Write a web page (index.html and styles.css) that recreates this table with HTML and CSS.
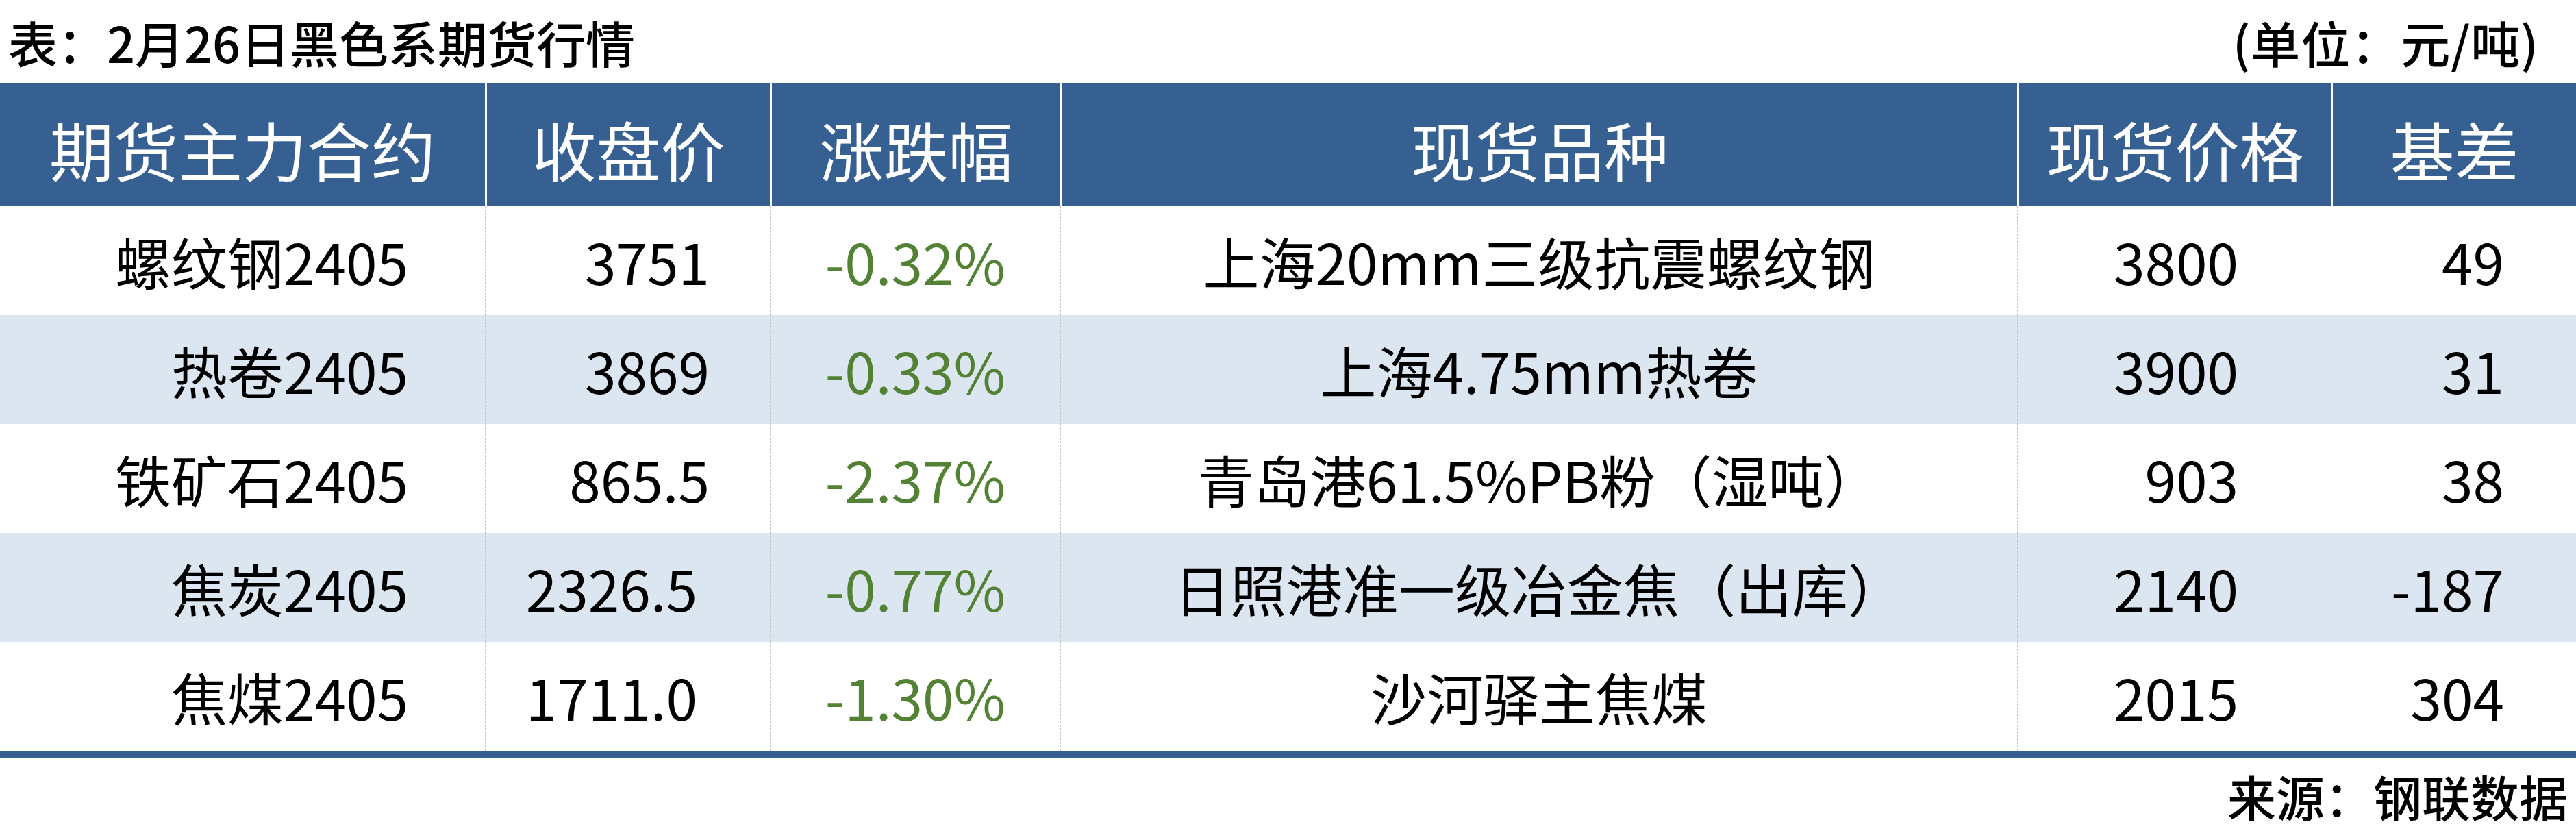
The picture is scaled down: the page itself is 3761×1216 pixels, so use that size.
FILE: index.html
```html
<!DOCTYPE html>
<html lang="zh-CN">
<head>
<meta charset="utf-8">
<title>2月26日黑色系期货行情</title>
<link rel="stylesheet" href="styles.css">
</head>
<body>
<div class="page">
  <div class="caption">
    <div class="title">表：2月26日黑色系期货行情</div>
    <div class="unit">(单位：元/吨)</div>
  </div>
  <table class="quotes">
    <colgroup>
      <col class="c1"><col class="c2"><col class="c3"><col class="c4"><col class="c5"><col class="c6">
    </colgroup>
    <thead>
      <tr>
        <th>期货主力合约</th>
        <th>收盘价</th>
        <th>涨跌幅</th>
        <th>现货品种</th>
        <th>现货价格</th>
        <th>基差</th>
      </tr>
    </thead>
    <tbody>
      <tr>
        <td class="contract">螺纹钢2405</td>
        <td class="close">3751</td>
        <td class="chg">-0.32%</td>
        <td class="spot">上海20mm三级抗震螺纹钢</td>
        <td class="price">3800</td>
        <td class="basis">49</td>
      </tr>
      <tr class="alt">
        <td class="contract">热卷2405</td>
        <td class="close">3869</td>
        <td class="chg">-0.33%</td>
        <td class="spot">上海4.75mm热卷</td>
        <td class="price">3900</td>
        <td class="basis">31</td>
      </tr>
      <tr>
        <td class="contract">铁矿石2405</td>
        <td class="close">865.5</td>
        <td class="chg">-2.37%</td>
        <td class="spot">青岛港61.5%PB粉（湿吨）</td>
        <td class="price">903</td>
        <td class="basis">38</td>
      </tr>
      <tr class="alt">
        <td class="contract">焦炭2405</td>
        <td class="close shifted">2326.5</td>
        <td class="chg">-0.77%</td>
        <td class="spot">日照港准一级冶金焦（出库）</td>
        <td class="price">2140</td>
        <td class="basis">-187</td>
      </tr>
      <tr>
        <td class="contract">焦煤2405</td>
        <td class="close shifted">1711.0</td>
        <td class="chg">-1.30%</td>
        <td class="spot">沙河驿主焦煤</td>
        <td class="price">2015</td>
        <td class="basis">304</td>
      </tr>
    </tbody>
  </table>
  <div class="source">来源：钢联数据</div>
</div>
</body>
</html>
```

FILE: styles.css
```css
html, body {
  margin: 0;
  padding: 0;
  background: #ffffff;
}

.page {
  width: 3761px;
  font-family: "Noto Sans CJK SC", "Noto Sans", sans-serif;
  color: #000000;
}

.caption {
  height: 121px;
  display: flex;
  justify-content: space-between;
  align-items: center;
  padding: 0 54px 0 12px;
  box-sizing: border-box;
  font-size: 72px;
  font-weight: 500;
  line-height: 1;
}

.unit {
  letter-spacing: 1px;
}

.quotes {
  width: 3761px;
  table-layout: fixed;
  border-collapse: separate;
  border-spacing: 0;
  border-bottom: 10px solid #366092;
}

.c1 { width: 708px; }
.c2 { width: 416px; }
.c3 { width: 424px; }
.c4 { width: 1397px; }
.c5 { width: 458px; }
.c6 { width: 358px; }

.quotes th {
  height: 180px;
  box-sizing: border-box;
  background: #366092;
  color: #ffffff;
  font-size: 94px;
  font-weight: 400;
  text-align: center;
  vertical-align: middle;
  padding: 12px 0 0 0;
  line-height: 1;
  border-left: 3px solid #ffffff;
  white-space: nowrap;
}

.quotes th:first-child {
  border-left: none;
}

.quotes td {
  height: 159px;
  box-sizing: border-box;
  font-size: 82px;
  font-weight: 400;
  line-height: 1;
  vertical-align: middle;
  padding: 0;
  border-left: 1px dashed #c4c4c4;
  white-space: nowrap;
}

.quotes td:first-child {
  border-left: none;
}

.quotes tr.alt td {
  background: #dce6f1;
}

.contract {
  text-align: right;
  padding-right: 112px !important;
}

.close {
  text-align: right;
  padding-right: 88px !important;
}

.close.shifted {
  padding-right: 106px !important;
}

.chg {
  text-align: center;
  color: #548235;
}

.spot {
  text-align: center;
}

.price {
  text-align: right;
  padding-right: 135px !important;
}

.basis {
  text-align: right;
  padding-right: 105px !important;
}

.source {
  height: 111px;
  display: flex;
  justify-content: flex-end;
  align-items: center;
  padding-right: 12px;
  font-size: 71px;
  font-weight: 500;
  line-height: 1;
}
```
